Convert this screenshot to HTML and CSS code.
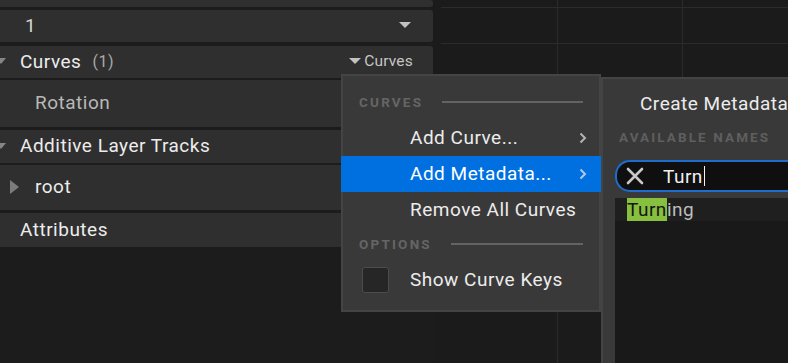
FILE: index.html
```html
<!DOCTYPE html>
<html>
<head>
<meta charset="utf-8">
<link rel="stylesheet" href="styles.css">
</head>
<body>
<div class="app">
  <div class="details">
    <div class="row r-top"></div>
    <div class="row r-one"><span class="val">1</span><span class="spacer"></span><span class="combo-arrow"></span></div>
    <div class="row r-cat"><span class="exp-down"></span><span class="cat-name">Curves</span><span class="count">(1)</span><span class="spacer"></span><span class="filter"><span class="filter-tri"></span>Curves</span></div>
    <div class="row r-child"><span class="child-name">Rotation</span></div>
    <div class="row r-cat2"><span class="exp-down"></span><span class="cat-name">Additive Layer Tracks</span></div>
    <div class="row r-child2"><span class="exp-right"></span><span class="child-name bright">root</span></div>
    <div class="row r-cat3"><span class="cat-name">Attributes</span></div>
  </div>
  <div class="graph"></div>
</div>

<div class="menu">
  <div class="menu-header first"><span class="header-text">CURVES</span><span class="header-line"></span></div>
  <div class="menu-item"><span class="item-text">Add Curve...</span><svg class="chev" width="8" height="12" viewBox="0 0 8 12"><path d="M1.5 1.5 L6 6 L1.5 10.5" fill="none" stroke="#b4b4b4" stroke-width="2"/></svg></div>
  <div class="menu-item active"><span class="item-text">Add Metadata...</span><svg class="chev" width="8" height="12" viewBox="0 0 8 12"><path d="M1.5 1.5 L6 6 L1.5 10.5" fill="none" stroke="#b4c8e8" stroke-width="2"/></svg></div>
  <div class="menu-item"><span class="item-text">Remove All Curves</span></div>
  <div class="menu-header"><span class="header-text">OPTIONS</span><span class="header-line"></span></div>
  <div class="menu-item check-item"><span class="checkbox"></span><span class="item-text">Show Curve Keys</span></div>
</div>

<div class="submenu">
  <div class="sub-title">Create Metadata...</div>
  <div class="sub-label">AVAILABLE NAMES</div>
  <div class="search">
    <svg class="clear" width="18" height="18" viewBox="0 0 18 18"><path d="M2 2 L16 16 M16 2 L2 16" stroke="#c8c8c8" stroke-width="2.6" stroke-linecap="round"/></svg>
    <span class="search-text">Turn</span><span class="caret"></span>
  </div>
  <div class="list">
    <div class="list-row"><span class="match">Turn</span><span class="rest">ing</span></div>
  </div>
</div>
</body>
</html>
```

FILE: styles.css
```css
* { box-sizing: border-box; }

html, body {
  margin: 0;
  padding: 0;
}

body {
  width: 788px;
  height: 363px;
  overflow: hidden;
  background: #1b1b1b;
  font-family: Roboto, "Noto Sans", sans-serif;
  color: #e6e6e6;
  position: relative;
}

.app {
  display: flex;
  height: 363px;
}

.details {
  width: 433px;
  margin-right: 8px;
  display: flex;
  flex-direction: column;
  background: #1c1c1c;
}

.row {
  background: #2f2f2f;
  border-radius: 0 3px 3px 0;
  display: flex;
  align-items: center;
  font-size: 19px;
  letter-spacing: 0.5px;
  padding-bottom: 2px;
}

.r-top { height: 7px; padding-bottom: 0; }
.r-one { height: 32px; margin-top: 3px; padding-left: 25px; padding-right: 22px; }
.r-cat { height: 32px; margin-top: 4px; padding-right: 20px; }
.r-child { height: 47px; margin-top: 2px; padding-left: 35px; }
.r-cat2 { height: 33px; margin-top: 3px; }
.r-child2 { height: 45px; margin-top: 2px; padding-left: 10px; }
.r-cat3 { height: 34px; margin-top: 3px; padding-left: 20px; }

.spacer { flex: 1; }

.val { color: #d4d4d4; }

.combo-arrow {
  width: 0;
  height: 0;
  border-left: 6px solid transparent;
  border-right: 6px solid transparent;
  border-top: 6px solid #c2c2c2;
}

.exp-down {
  width: 0;
  height: 0;
  margin-left: -4px;
  margin-right: 14px;
  border-left: 5px solid transparent;
  border-right: 5px solid transparent;
  border-top: 6px solid #858585;
}

.exp-right {
  width: 0;
  height: 0;
  border-top: 7px solid transparent;
  border-bottom: 7px solid transparent;
  border-left: 9px solid #7c7c7c;
  margin-right: 16px;
}

.cat-name { color: #ececec; }

.count {
  color: #a9a9a9;
  font-size: 16px;
  margin-left: 11px;
}

.filter {
  display: flex;
  align-items: center;
  color: #c6c6c6;
  font-size: 15.5px;
  letter-spacing: 0.2px;
}

.filter-tri {
  width: 0;
  height: 0;
  border-left: 6px solid transparent;
  border-right: 6px solid transparent;
  border-top: 6px solid #c2c2c2;
  margin-right: 3px;
}

.child-name { color: #b8b8b8; }
.child-name.bright { color: #ececec; }

.graph {
  flex: 1;
  background:
    linear-gradient(#2b2b2b, #2b2b2b) 0 7px / 100% 1px no-repeat,
    linear-gradient(#2b2b2b, #2b2b2b) 0 43px / 100% 1px no-repeat,
    linear-gradient(#2b2b2b, #2b2b2b) 116px 0 / 1px 100% no-repeat,
    linear-gradient(#2b2b2b, #2b2b2b) 241px 0 / 1px 100% no-repeat,
    #1b1b1b;
}

/* Context menu */
.menu {
  position: absolute;
  left: 341px;
  top: 74px;
  width: 260px;
  background: #393939;
  box-shadow: inset 0 0 0 2px #444444;
  padding-bottom: 14px;
}

.menu-header {
  display: flex;
  align-items: center;
  height: 16px;
  margin: 8px 0 10px;
  padding: 0 18px;
}

.menu-header.first { margin-top: 20px; }

.header-text {
  font-size: 13.5px;
  font-weight: 700;
  letter-spacing: 2.2px;
  color: #656565;
  line-height: 16px;
}

.header-line {
  flex: 1;
  height: 2px;
  background: #636363;
  margin-left: 19px;
}

.menu-item {
  height: 36px;
  display: flex;
  align-items: center;
  padding-left: 69px;
  padding-right: 14px;
  padding-bottom: 1px;
  font-size: 19px;
  letter-spacing: 0.5px;
  color: #ececec;
}

.menu-item .item-text { flex: 1; }

.menu-item.active {
  background: #0070e0;
  color: #ffffff;
}

.check-item { padding-left: 21px; }

.checkbox {
  width: 27px;
  height: 26px;
  border: 1px solid #4c4c4c;
  border-radius: 3px;
  background: #262626;
  margin-right: 21px;
}

/* Submenu */
.submenu {
  position: absolute;
  left: 601px;
  top: 77px;
  width: 187px;
  height: 286px;
  overflow: hidden;
  background: #393939;
  box-shadow: inset 2px 2px 0 0 #444444;
  padding-left: 14px;
}

.sub-title {
  margin-top: 16px;
  padding-left: 25px;
  line-height: 22px;
  font-size: 19px;
  letter-spacing: 0.5px;
  color: #ececec;
  white-space: nowrap;
}

.sub-label {
  margin-top: 14px;
  padding-left: 4px;
  line-height: 16px;
  font-size: 13.5px;
  font-weight: 700;
  letter-spacing: 2.1px;
  color: #5f5f5f;
  white-space: nowrap;
}

.search {
  margin-top: 15px;
  height: 32px;
  width: 200px;
  border: 2px solid #1e6ccc;
  border-right: none;
  border-radius: 15px 0 0 15px;
  background: #0f0f0f;
  display: flex;
  align-items: center;
  padding-left: 9px;
}

.clear { flex: none; }

.search-text {
  margin-left: 19px;
  font-size: 19px;
  letter-spacing: 0.5px;
  color: #f0f0f0;
}

.caret {
  width: 1px;
  height: 20px;
  background: #f4f4f4;
  margin-left: 1px;
}

.list {
  margin-top: 6px;
  height: 200px;
  background: #191919;
}

.list-row {
  height: 23px;
  background: #1f1f1f;
  display: flex;
  align-items: center;
  padding-left: 12px;
  font-size: 19px;
  letter-spacing: 0.5px;
}

.match {
  background: #86c03e;
  color: #161616;
  height: 23px;
  line-height: 23px;
}

.rest { color: #bdbdbd; }
```
